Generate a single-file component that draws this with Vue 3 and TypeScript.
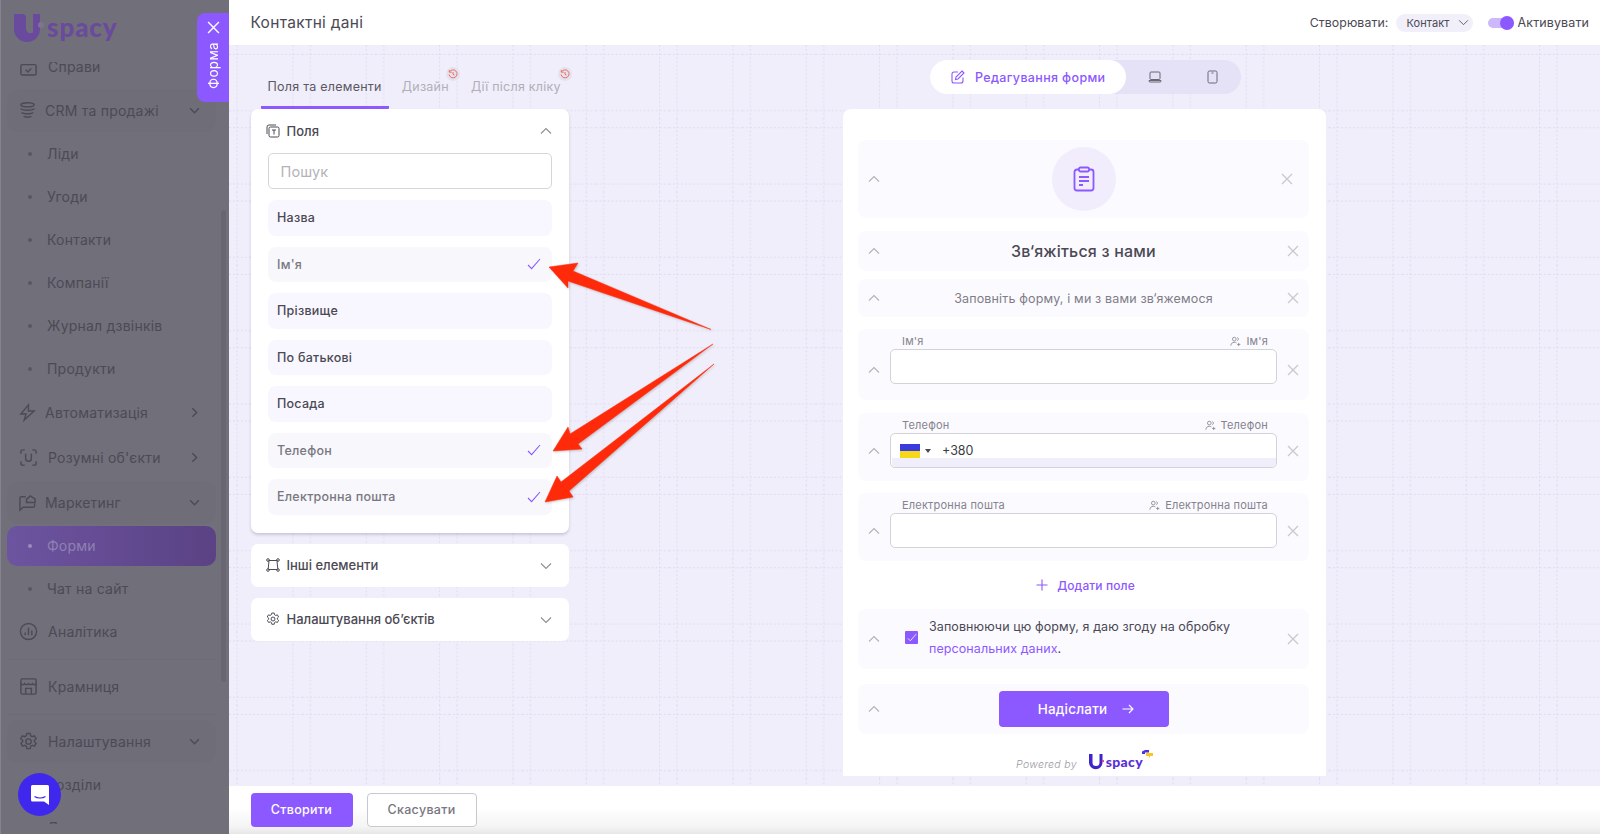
<template>
  <div class="app">
    <svg class="sprite" aria-hidden="true">
      <symbol id="chev-up" viewBox="0 0 12 8"><path d="M1 6.5 6 1.5l5 5" fill="none" stroke="currentColor" stroke-width="1.1" /></symbol>
      <symbol id="chev-down" viewBox="0 0 12 8"><path d="M1 1.5l5 5 5-5" fill="none" stroke="currentColor" stroke-width="1.1" /></symbol>
      <symbol id="cross" viewBox="0 0 12 12"><path d="M1 1l10 10M11 1 1 11" fill="none" stroke="currentColor" stroke-width="1.3" /></symbol>
      <symbol id="check" viewBox="0 0 14 12"><path d="M1 7l3.6 3.6L13 1" fill="none" stroke="currentColor" stroke-width="1.1" /></symbol>
      <symbol id="person" viewBox="0 0 12 12"><g fill="none" stroke="currentColor" stroke-width=".9"><circle cx="4.7" cy="3.4" r="2" /><path d="M8 1.6a2 2 0 0 1 0 3.6M1 10.5c0-2.4 1.600-3.600 3.700-3.600 1 0 1.800.2 2.400.7M9.500 7.500v3.500M7.800 9.200h3.500" /></g></symbol>
    </svg>

    <aside class="sidebar">
      <div class="logo">
        <svg width="32" height="30" viewBox="0 0 32 30">
          <path d="M0 1h8a4 4 0 0 1 4 4v11a4.500 4.500 0 0 0 7 3.500V1h7v15a13 13 0 0 1-26 0z" fill="#6a4a9d" />
          <circle cx="27" cy="12" r="3" fill="#7d7590" />
        </svg>
        <span>spacy</span>
      </div>
      <nav class="menu">
        <div
          v-for="item in menu"
          :key="item.label"
          class="menu-item"
          :class="[item.kind, { grouped: item.grouped, active: item.active, inset: item.inset, ruled: item.ruled }]"
          :style="{ marginTop: item.gap ? item.gap + 'px' : undefined }"
        >
          <span v-if="item.kind === 'sub'" class="dot"></span>
          <svg v-else class="menu-icon" viewBox="0 0 20 20" fill="none" stroke="currentColor" stroke-width="1.500" v-html="item.icon"></svg>
          <span class="menu-label">{{ item.label }}</span>
          <svg v-if="item.arrow" class="menu-arrow" viewBox="0 0 12 12" fill="none" stroke="currentColor" stroke-width="1.300">
            <path :d="item.arrow === 'down' ? 'M2 4l4 4 4-4' : 'M4 2l4 4-4 4'" />
          </svg>
        </div>
      </nav>
      <div class="scroll-thumb"></div>
      <div class="chat-bubble">
        <svg width="20" height="22" viewBox="0 0 20 22">
          <path d="M2.500 1h15A1.500 1.500 0 0 1 19 2.500V21l-5-3.500H2.500A1.500 1.500 0 0 1 1 16V2.500A1.500 1.500 0 0 1 2.500 1z" fill="#fff" />
          <path d="M4.500 12.500c3 2 8 2 11 0" fill="none" stroke="#4027ee" stroke-width="1.200" />
        </svg>
      </div>
    </aside>

    <div class="main">
      <div class="form-tab">
        <svg width="13" height="13"><use href="#cross" /></svg>
        <span>Форма</span>
      </div>

      <header class="topbar">
        <h1>Контактні дані</h1>
        <div class="topbar-right">
          <span>Створювати:</span>
          <div class="entity-pill">Контакт <svg width="11" height="7"><use href="#chev-down" /></svg></div>
          <div class="toggle"><i></i></div>
          <span class="activate">Активувати</span>
        </div>
      </header>

      <main class="canvas">
        <svg class="grid-bg" width="100%" height="100%" aria-hidden="true">
          <defs>
            <pattern id="grid" width="73.33" height="73.33" patternUnits="userSpaceOnUse">
              <path d="M8 0v73.330M64 0v73.330M0 9.300h73.330M0 65.700h73.330" stroke="#dedbf3" stroke-dasharray="2 2" fill="none" />
            </pattern>
          </defs>
          <rect width="100%" height="100%" fill="url(#grid)" />
        </svg>

        <section class="builder">
          <div class="tabs">
            <div class="tab current">Поля та елементи</div>
            <div class="tab">Дизайн<span class="badge"><svg viewBox="0 0 10 10" fill="none" stroke="#ef6a6a" stroke-width="1"><path d="M1.500 3a4 4 0 1 1-.4 2.500M1.300 1v2.200h2.200M5 3v2.200l1.500 1" /></svg></span></div>
            <div class="tab">Дії після кліку<span class="badge"><svg viewBox="0 0 10 10" fill="none" stroke="#ef6a6a" stroke-width="1"><path d="M1.500 3a4 4 0 1 1-.4 2.500M1.300 1v2.200h2.200M5 3v2.200l1.500 1" /></svg></span></div>
          </div>

          <div class="panel open">
            <div class="panel-head">
              <svg width="14" height="14" viewBox="0 0 14 14" fill="none" stroke="#4b4953" stroke-width="1">
                <rect x="3" y="3" width="10" height="10" rx="1.500" />
                <path d="M1 10V3a2 2 0 0 1 2-2h7M6 6h4M8 6v4.500" />
              </svg>
              <span>Поля</span>
              <svg class="panel-chev" width="12" height="8"><use href="#chev-up" /></svg>
            </div>
            <div class="search">Пошук</div>
            <div class="field-list">
              <div v-for="field in fields" :key="field.name" class="field-item" :class="{ used: field.used }">
                {{ field.name }}
                <svg v-if="field.used" width="14" height="12"><use href="#check" /></svg>
              </div>
            </div>
          </div>

          <div class="panel">
            <div class="panel-head">
              <svg width="14" height="14" viewBox="0 0 14 14" fill="none" stroke="#4b4953" stroke-width="1">
                <path d="M2.500 2.500h9M2.500 11.500h9M3 3l-.8 7.800M11 3l.8 7.800" />
                <circle cx="2" cy="2" r="1.300" /><circle cx="12" cy="2" r="1.300" /><circle cx="2" cy="12" r="1.300" /><circle cx="12" cy="12" r="1.300" />
              </svg>
              <span>Інші елементи</span>
              <svg class="panel-chev" width="12" height="8"><use href="#chev-down" /></svg>
            </div>
          </div>

          <div class="panel">
            <div class="panel-head">
              <svg width="14" height="14" viewBox="0 0 20 20" fill="none" stroke="#4b4953" stroke-width="1.400">
                <circle cx="10" cy="10" r="2.800" />
                <path d="M8.300 1.500h3.400l.5 2.400 1.700 1 2.400-.8 1.700 3-1.800 1.600v1.600l1.800 1.600-1.700 3-2.400-.8-1.700 1-.5 2.400H8.300l-.5-2.400-1.700-1-2.400.8-1.700-3 1.800-1.600V8.700L1.800 7.100l1.700-3 2.400.8 1.700-1z" />
              </svg>
              <span>Налаштування об’єктів</span>
              <svg class="panel-chev" width="12" height="8"><use href="#chev-down" /></svg>
            </div>
          </div>
        </section>

        <section class="preview">
          <div class="mode-switch">
            <div class="mode active">
              <svg width="14" height="14" viewBox="0 0 14 14" fill="none" stroke="currentColor" stroke-width="1.100">
                <path d="M7 2H3a2 2 0 0 0-2 2v7a2 2 0 0 0 2 2h7a2 2 0 0 0 2-2V7.500" />
                <path d="M11 1l2 2-6 6-2.500.5L5 7z" />
              </svg>
              Редагування форми
            </div>
            <div class="mode laptop">
              <svg width="14" height="12" viewBox="0 0 14 12" fill="none" stroke="currentColor" stroke-width="1">
                <rect x="2" y="1" width="10" height="7.500" rx="1" /><path d="M1 9.500h12v.5a1 1 0 0 1-1 1H2a1 1 0 0 1-1-1z" />
              </svg>
            </div>
            <div class="mode phone">
              <svg width="11" height="14" viewBox="0 0 11 14" fill="none" stroke="currentColor" stroke-width="1">
                <rect x="1" y="1" width="9" height="12" rx="1.500" /><path d="M4.500 3h2" />
              </svg>
            </div>
          </div>

          <div class="form-card">
            <div class="row row-icon">
              <svg class="row-chev" width="12" height="8"><use href="#chev-up" /></svg>
              <div class="row-body">
                <div class="icon-circle">
                  <svg width="22" height="26" viewBox="0 0 22 26" fill="none" stroke="#8c58ff" stroke-width="1.800">
                    <path d="M6 3.500H4A2.500 2.500 0 0 0 1.500 6v16A2.500 2.500 0 0 0 4 24.500h14a2.500 2.500 0 0 0 2.500-2.500V6A2.500 2.500 0 0 0 18 3.500h-2" />
                    <rect x="6" y="1.500" width="10" height="4" rx="1.500" />
                    <path d="M6 11h10M6 15h10M6 19h4" />
                  </svg>
                </div>
              </div>
              <svg class="row-x shift" width="12" height="12"><use href="#cross" /></svg>
            </div>

            <div class="row row-title">
              <svg class="row-chev" width="12" height="8"><use href="#chev-up" /></svg>
              <div class="row-body">Зв‘яжіться з нами</div>
              <svg class="row-x" width="12" height="12"><use href="#cross" /></svg>
            </div>

            <div class="row row-sub">
              <svg class="row-chev" width="12" height="8"><use href="#chev-up" /></svg>
              <div class="row-body">Заповніть форму, і ми з вами зв‘яжемося</div>
              <svg class="row-x" width="12" height="12"><use href="#cross" /></svg>
            </div>

            <div v-for="input in inputs" :key="input.label" class="row row-field" :class="input.cls">
              <svg class="row-chev" width="12" height="8"><use href="#chev-up" /></svg>
              <div class="row-body">
                <div class="field-labels">
                  <span>{{ input.label }}</span>
                  <span class="field-owner"><svg width="11" height="11"><use href="#person" /></svg>{{ input.label }}</span>
                </div>
                <div class="field-input">
                  <template v-if="input.phone">
                    <span class="flag"></span>
                    <span class="flag-arrow"></span>
                    <span class="phone-code">+380</span>
                    <span class="phone-strip"></span>
                  </template>
                </div>
              </div>
              <svg class="row-x" width="12" height="12"><use href="#cross" /></svg>
            </div>

            <div class="add-field">
              <svg width="12" height="12" viewBox="0 0 12 12" stroke="currentColor" stroke-width="1.100"><path d="M6 .5v11M.5 6h11" /></svg>
              Додати поле
            </div>

            <div class="row row-consent">
              <svg class="row-chev" width="12" height="8"><use href="#chev-up" /></svg>
              <div class="row-body">
                <span class="checkbox"><svg width="10" height="9" color="#fff"><use href="#check" /></svg></span>
                <p>Заповнюючи цю форму, я даю згоду на обробку<br /><a>персональних даних</a>.</p>
              </div>
              <svg class="row-x" width="12" height="12"><use href="#cross" /></svg>
            </div>

            <div class="row row-submit">
              <svg class="row-chev" width="12" height="8"><use href="#chev-up" /></svg>
              <div class="row-body">
                <div class="submit">
                  Надіслати
                  <svg width="12" height="10" viewBox="0 0 12 10" fill="none" stroke="currentColor" stroke-width="1.100"><path d="M.5 5h10.500M7 1l4 4-4 4" /></svg>
                </div>
              </div>
            </div>

            <div class="powered">
              <em>Powered by</em>
              <span class="mini-logo">
                <svg width="16" height="17" viewBox="0 0 16 17"><path d="M1 1h3.500v8.500a3.500 3.500 0 0 0 7 0V1H14.500v8.500a6.700 6.700 0 0 1-13.500 0z" fill="#3e25c9" /><circle cx="15" cy="8" r="1.200" fill="#e0459b" /></svg>
                <b>spacy</b>
                <svg class="mini-flag" width="11" height="8" viewBox="0 0 11 8"><path d="M0 1.500 3 0h4v2.500H3V4H0z" fill="#4a35e0" /><path d="M4 3h7v3H8.500L7 8V6H4z" fill="#f5c91f" /></svg>
              </span>
            </div>
          </div>
        </section>
      </main>

      <footer class="footer">
        <button class="btn primary">Створити</button>
        <button class="btn ghost">Скасувати</button>
      </footer>
    </div>

    <svg class="arrows" width="1600" height="834" viewBox="0 0 1600 834" aria-hidden="true">
      <polygon points="549,267 578,263 573,271 711,329.500 568,281 568,288" />
      <polygon points="553,451 568,427 570,434 713,344 578,444 582,449" />
      <polygon points="545,502 557,476 561,482 714,364 569,491 573,497" />
    </svg>
  </div>
</template>

<script setup lang="ts">
interface MenuItem {
  label: string
  kind: 'top' | 'sub'
  icon?: string
  arrow?: 'down' | 'right'
  grouped?: boolean
  active?: boolean
  inset?: boolean
  ruled?: boolean
  gap?: number
}

const icons = {
  tasks: '<rect x="2" y="8" width="16" height="11" rx="1.500"/><path d="M7 13.500l2.200 2.200L13 12"/>',
  crm: '<ellipse cx="10" cy="4" rx="7" ry="2.200"/><path d="M3 8c1 2.400 13 2.400 14 0M4 12c1 2 11 2 12 0M6 16c1 1.400 7 1.400 8 0"/>',
  zap: '<path d="M11 2 3 11.500h5.500L6.500 18 17 8.500h-6z"/>',
  scan: '<path d="M2 6V4a2 2 0 0 1 2-2h2M14 2h2a2 2 0 0 1 2 2v2M18 14v2a2 2 0 0 1-2 2h-2M6 18H4a2 2 0 0 1-2-2v-2M7 6v5a3 3 0 0 0 6 0V6"/>',
  marketing: '<path d="M8 4H3.500A1.500 1.500 0 0 0 2 5.500V18l3.500-3H16a1.500 1.500 0 0 0 1.500-1.500V11"/><path d="M9 10V6.500L13 3l5 3.500V10z"/>',
  chart: '<circle cx="10" cy="10" r="8.500"/><path d="M6.500 14v-3M10 14V6M13.500 14V9"/>',
  store: '<rect x="2" y="2" width="16" height="16" rx="1.500"/><path d="M2 7c2 1.500 3 1.500 4 0 1 1.500 3 1.500 4 0 1 1.500 3 1.500 4 0 1 1.500 2 1.500 4 0M7 18v-6h6v6"/>',
  gear: '<circle cx="10" cy="10" r="2.800"/><path d="M8.300 1.500h3.400l.5 2.400 1.700 1 2.400-.8 1.700 3-1.800 1.600v1.600l1.800 1.600-1.700 3-2.400-.8-1.700 1-.5 2.400H8.300l-.5-2.400-1.700-1-2.400.8-1.700-3 1.800-1.600V8.700L1.800 7.100l1.700-3 2.400.8 1.700-1z"/>'
}

const menu: MenuItem[] = [
  { label: 'Справи', kind: 'top', icon: icons.tasks, inset: true },
  { label: 'CRM та продажі', kind: 'top', icon: icons.crm, arrow: 'down', grouped: true, gap: 1.5 },
  { label: 'Ліди', kind: 'sub' },
  { label: 'Угоди', kind: 'sub' },
  { label: 'Контакти', kind: 'sub' },
  { label: 'Компанії', kind: 'sub' },
  { label: 'Журнал дзвінків', kind: 'sub' },
  { label: 'Продукти', kind: 'sub' },
  { label: 'Автоматизація', kind: 'top', icon: icons.zap, arrow: 'right', gap: 1 },
  { label: "Розумні об'єкти", kind: 'top', icon: icons.scan, arrow: 'right', inset: true, gap: 2 },
  { label: 'Маркетинг', kind: 'top', icon: icons.marketing, arrow: 'down', grouped: true, gap: 2 },
  { label: 'Форми', kind: 'sub', active: true },
  { label: 'Чат на сайт', kind: 'sub' },
  { label: 'Аналітика', kind: 'top', icon: icons.chart, inset: true },
  { label: 'Крамниця', kind: 'top', icon: icons.store, inset: true, ruled: true, gap: 12 },
  { label: 'Налаштування', kind: 'top', icon: icons.gear, arrow: 'down', inset: true, grouped: true, ruled: true, gap: 12 },
  { label: 'Розділи', kind: 'sub' },
  { label: 'Доступи', kind: 'sub' }
]

const fields = [
  { name: 'Назва', used: false },
  { name: "Ім'я", used: true },
  { name: 'Прізвище', used: false },
  { name: 'По батькові', used: false },
  { name: 'Посада', used: false },
  { name: 'Телефон', used: true },
  { name: 'Електронна пошта', used: true }
]

const inputs = [
  { label: "Ім'я", cls: 'tall', phone: false },
  { label: 'Телефон', cls: 'after-tall', phone: true },
  { label: 'Електронна пошта', cls: '', phone: false }
]
</script>

<style scoped>
.app {
  position: relative;
  display: flex;
  height: 834px;
  overflow: hidden;
  font-family: Inter, "Noto Sans", sans-serif;
  color: #4b4953;
  background: #fff;
}
.sprite {
  position: absolute;
  width: 0;
  height: 0;
}

/* sidebar, dimmed by the open editor */
.sidebar {
  position: relative;
  flex: 0 0 229px;
  overflow: hidden;
  background: #716f7a;
  border-left: 1px solid #85838d;
  box-sizing: border-box;
  color: #4c4a55;
}
.logo {
  position: absolute;
  left: 0;
  right: 0;
  top: 0;
  z-index: 2;
  display: flex;
  align-items: center;
  height: 62px;
  padding: 0 0 6px 13px;
  box-sizing: border-box;
  background: #716f7a;
  color: #6a4a9d;
  font-family: Lato, sans-serif;
  font-size: 26px;
  font-weight: 900;
  letter-spacing: .9px;
}
.logo span {
  margin-left: 1px;
  margin-top: -3px;
}
.menu {
  height: 824px;
  overflow: hidden;
  box-sizing: border-box;
  padding: 44.5px 13px 0 6px;
}
.menu-item {
  position: relative;
  display: flex;
  align-items: center;
  height: 43px;
  padding-left: 11px;
  font-size: 14px;
  letter-spacing: .22px;
  border-radius: 10px;
}
.menu-item.grouped {
  background: rgba(0, 0, 0, .012);
}
.menu-item.sub {
  padding-left: 40px;
}
.menu-icon {
  flex: 0 0 19px;
  width: 19px;
  height: 19px;
  margin-right: 8px;
}
.menu-item.inset .menu-icon {
  margin-left: 1px;
  margin-right: 10px;
}
.menu-item.ruled::before {
  content: "";
  position: absolute;
  left: 2px;
  right: 0;
  top: -6px;
  border-top: 1px dotted #686670;
}
.dot {
  position: absolute;
  left: 21px;
  top: 20px;
  width: 4px;
  height: 4px;
  border-radius: 50%;
  background: #595763;
}
.menu-arrow {
  position: absolute;
  right: 15px;
  top: 15px;
  width: 13px;
  height: 13px;
}
.menu-item.active {
  height: 40px;
  margin: 1.5px 0;
  background: linear-gradient(90deg, #6d54a0, #5a4284);
  color: #8f81b3;
}
.menu-item.active .dot {
  top: 18px;
  background: #9a8dbb;
}
.scroll-thumb {
  position: absolute;
  left: 220px;
  top: 210px;
  width: 5px;
  height: 472px;
  border-radius: 3px;
  background: #686671;
}
.chat-bubble {
  position: absolute;
  left: 17px;
  top: 773px;
  display: flex;
  align-items: center;
  justify-content: center;
  width: 43px;
  height: 43px;
  border-radius: 50%;
  background: #4027ee;
}

/* main column */
.main {
  position: relative;
  flex: 1;
  display: flex;
  flex-direction: column;
  min-width: 0;
}
.form-tab {
  position: absolute;
  left: -32px;
  top: 13px;
  z-index: 3;
  display: flex;
  flex-direction: column;
  align-items: center;
  width: 32px;
  height: 89px;
  padding-top: 8px;
  box-sizing: border-box;
  border-radius: 8px 0 0 8px;
  background: #8c58ff;
  color: #fff;
}
.form-tab span {
  margin-top: 8px;
  writing-mode: vertical-rl;
  transform: rotate(180deg);
  font-size: 13.5px;
  letter-spacing: .3px;
}
.topbar {
  flex: 0 0 45px;
  display: flex;
  align-items: center;
  justify-content: space-between;
  padding: 0 11px 0 21.5px;
  background: #fff;
}
.topbar h1 {
  margin: 0;
  font-size: 15.5px;
  font-weight: 400;
  letter-spacing: .3px;
}
.topbar-right {
  display: flex;
  align-items: center;
  font-size: 12.3px;
  letter-spacing: .1px;
}
.entity-pill {
  display: flex;
  align-items: center;
  gap: 8px;
  height: 18px;
  margin-left: 8px;
  padding: 0 4px 0 10px;
  border-radius: 9px;
  background: #f1effa;
  font-size: 11px;
}
.entity-pill svg {
  color: #5f5d68;
}
.toggle {
  position: relative;
  width: 26px;
  height: 10px;
  margin-left: 15px;
  border-radius: 5px;
  background: #cdb8fb;
}
.toggle i {
  position: absolute;
  right: 0;
  top: -2px;
  width: 14px;
  height: 14px;
  border-radius: 50%;
  background: #8c58ff;
}
.activate {
  margin-left: 4px;
  font-size: 12.5px;
}

.canvas {
  position: relative;
  flex: 1;
  display: flex;
  gap: 274.5px;
  min-height: 0;
  padding: 0 0 11px 21.5px;
  background: #f0eefa;
}
.grid-bg {
  position: absolute;
  left: 0;
  top: 0;
}

/* left builder column */
.builder {
  position: relative;
  flex: 0 0 318px;
  min-width: 0;
}
.tabs {
  display: flex;
  align-items: flex-end;
  height: 64px;
  padding-left: 10px;
  font-size: 12.5px;
  letter-spacing: .25px;
  white-space: nowrap;
}
.tab {
  position: relative;
  height: 33px;
  padding: 3px 7px 0;
  box-sizing: border-box;
  color: #b1afb9;
}
.tab + .tab {
  margin-left: 14px;
  padding: 3px 4px 0;
}
.tab.current {
  color: #5a5863;
  border-bottom: 3px solid #8c58ff;
  border-radius: 0 0 1px 1px;
}
.tab.current + .tab {
  margin-left: 9px;
}
.badge {
  position: absolute;
  right: -7px;
  top: -9px;
  display: flex;
  align-items: center;
  justify-content: center;
  width: 14px;
  height: 14px;
  border-radius: 50%;
  background: #e4e2ea;
}
.badge svg {
  width: 10px;
  height: 10px;
}
.panel {
  margin-bottom: 11px;
  border-radius: 7px;
  background: #fff;
}
.panel.open {
  padding-bottom: 18px;
  box-shadow: 0 2px 3px rgba(70, 60, 110, .22);
}
.panel-head {
  position: relative;
  display: flex;
  align-items: center;
  gap: 7px;
  height: 43px;
  padding-left: 15px;
  font-size: 13px;
  font-weight: 500;
}
.panel.open .panel-head {
  height: 44px;
}
.panel-chev {
  position: absolute;
  right: 17px;
  top: 18px;
  color: #8f8d97;
}
.search {
  display: flex;
  align-items: center;
  height: 36px;
  margin: 0 17px 11px;
  padding-left: 12px;
  box-sizing: border-box;
  border: 1px solid #d6d5da;
  border-radius: 5px;
  color: #b4b3ba;
  font-size: 14.5px;
  letter-spacing: .1px;
}
.field-list {
  display: flex;
  flex-direction: column;
  gap: 11px;
  margin: 0 17px;
}
.field-item {
  display: flex;
  align-items: center;
  justify-content: space-between;
  height: 35.5px;
  padding: 0 11px 0 9.5px;
  border-radius: 8px;
  background: #f8f7ff;
  font-size: 12.5px;
  font-weight: 500;
  letter-spacing: .25px;
}
.field-item.used {
  color: #797781;
  background: #f8f8fc;
}
.field-item svg {
  color: #8c58ff;
}

/* right preview column */
.preview {
  position: relative;
  flex: 0 0 482.5px;
  display: flex;
  flex-direction: column;
  align-items: center;
  padding-top: 15px;
  box-sizing: border-box;
}
.mode-switch {
  flex: 0 0 34px;
  display: flex;
  width: 311px;
  margin-left: 3px;
  border-radius: 17px;
  background: #e5e1f7;
}
.mode {
  display: flex;
  align-items: center;
  justify-content: center;
  color: #6a6873;
}
.mode.active {
  width: 196px;
  gap: 10px;
  border-radius: 17px;
  background: #fff;
  color: #8c58ff;
  font-size: 12.5px;
  font-weight: 500;
  letter-spacing: .35px;
}
.mode.laptop {
  width: 58px;
}
.mode.phone {
  width: 57px;
}
.form-card {
  flex: 1;
  width: 100%;
  margin-top: 15px;
  padding: 31px 16.5px 0 15px;
  box-sizing: border-box;
  border-radius: 8px 8px 0 0;
  background: #fff;
}
.row {
  display: flex;
  align-items: center;
  border-radius: 8px;
  background: #fbfaff;
}
.row-chev {
  flex: none;
  margin: 0 10px;
  color: #b3b2b9;
}
.row-x {
  flex: none;
  margin: 0 10px;
  color: #c9c8cd;
}
.row-x.shift {
  margin-right: 16px;
}
.row-body {
  flex: 1;
  min-width: 0;
}
.row-icon {
  height: 78px;
}
.row-icon .row-body {
  display: flex;
  justify-content: center;
  margin-left: 6px;
}
.icon-circle {
  display: flex;
  align-items: center;
  justify-content: center;
  width: 64px;
  height: 64px;
  border-radius: 50%;
  background: #f1edfd;
}
.row-title {
  height: 40px;
  margin-top: 13px;
  font-size: 16px;
  font-weight: 450;
  letter-spacing: .2px;
  text-align: center;
}
.row-sub {
  height: 38px;
  margin-top: 8px;
  color: #7f7d87;
  font-size: 12.5px;
  letter-spacing: .15px;
  text-align: center;
}
.row-field {
  height: 68px;
  margin-top: 12px;
  align-items: flex-start;
}
.row-field.tall {
  height: 71px;
}
.row-field.after-tall {
  margin-top: 13px;
}
.row-field .row-chev {
  margin-top: 33.5px;
}
.row-field .row-x {
  margin-top: 31.5px;
}
.row-field.tall .row-chev {
  margin-top: 37px;
}
.row-field.tall .row-x {
  margin-top: 35px;
}
.field-labels {
  display: flex;
  justify-content: space-between;
  height: 16px;
  margin-top: 4px;
  padding: 0 9px 0 12px;
  color: #85838d;
  font-size: 11px;
  line-height: 16px;
  letter-spacing: .2px;
}
.field-owner {
  display: flex;
  align-items: center;
  gap: 5px;
}
.field-input {
  position: relative;
  display: flex;
  align-items: center;
  height: 35px;
  padding-left: 9px;
  box-sizing: border-box;
  border: 1px solid #d3d2d8;
  border-radius: 5px;
  background: #fff;
}
.flag {
  width: 20px;
  height: 14px;
  background: linear-gradient(#3a3bdc 50%, #f6d818 50%);
}
.flag-arrow {
  width: 0;
  height: 0;
  margin-left: 5px;
  border: 3px solid transparent;
  border-top: 4px solid #4b4953;
  border-bottom: 0;
}
.phone-code {
  margin-left: 11px;
  font-size: 12.5px;
  color: #3c3a44;
}
.phone-strip {
  position: absolute;
  left: 1px;
  right: 0;
  bottom: 0;
  height: 9px;
  background: #f0eefb;
  border-radius: 0 0 4px 4px;
}
.add-field {
  display: flex;
  align-items: center;
  justify-content: center;
  gap: 9px;
  height: 48px;
  padding-left: 4px;
  color: #8c58ff;
  font-size: 12px;
  font-weight: 500;
  letter-spacing: .1px;
}
.row-consent {
  height: 60px;
}
.row-consent .row-body {
  display: flex;
  align-items: center;
  gap: 11px;
  padding: 0 0 2px 15px;
}
.row-consent p {
  margin: 0;
  font-size: 12.5px;
  line-height: 22px;
  letter-spacing: .08px;
  white-space: nowrap;
}
.row-consent a {
  color: #8c58ff;
}
.checkbox {
  flex: none;
  display: flex;
  align-items: center;
  justify-content: center;
  width: 13px;
  height: 13px;
  margin-top: -1px;
  border-radius: 1px;
  background: #8c58ff;
}
.row-submit {
  height: 50px;
  margin-top: 15px;
}
.row-submit .row-body {
  display: flex;
  justify-content: center;
  padding-right: 32px;
}
.submit {
  display: flex;
  align-items: center;
  justify-content: center;
  gap: 15px;
  width: 170px;
  height: 36px;
  padding-left: 5px;
  box-sizing: border-box;
  border-radius: 4px;
  background: #8c58ff;
  color: #fff;
  font-size: 13.5px;
  font-weight: 500;
  letter-spacing: .2px;
}
.powered {
  display: flex;
  align-items: center;
  justify-content: center;
  gap: 11px;
  height: 24px;
  margin-top: 18px;
  padding-right: 8px;
}
.powered em {
  color: #9b9aa2;
  font-size: 10.5px;
  font-weight: 300;
  letter-spacing: .3px;
}
.mini-logo {
  position: relative;
  display: flex;
  align-items: center;
  margin-top: -5px;
}
.mini-logo b {
  margin-left: 2px;
  color: #5a2fd8;
  font-family: Lato, sans-serif;
  font-size: 14px;
  font-weight: 900;
  letter-spacing: .3px;
}
.mini-flag {
  position: absolute;
  right: -10px;
  top: -3px;
}

.footer {
  position: relative;
  flex: 0 0 48px;
  display: flex;
  align-items: center;
  gap: 14px;
  padding: 0 0 1px 21.5px;
  box-sizing: border-box;
  background: linear-gradient(#fff 45%, #f4f4f4 85%, #e7e7e7);
}
.btn {
  height: 34px;
  box-sizing: border-box;
  border-radius: 4px;
  font-family: inherit;
  font-size: 12.5px;
  font-weight: 500;
  letter-spacing: .3px;
}
.btn.primary {
  width: 102px;
  border: 0;
  background: #8c58ff;
  color: #fff;
}
.btn.ghost {
  width: 110px;
  border: 1px solid #c9c8ce;
  background: #fff;
  color: #787680;
}

.arrows {
  position: absolute;
  left: 0;
  top: 0;
  pointer-events: none;
  filter: drop-shadow(1px 1px 1px rgba(0, 0, 0, .2));
}
.arrows polygon {
  fill: #ff2a0a;
  stroke: #ff2a0a;
  stroke-width: .5;
  stroke-linejoin: round;
}
</style>
